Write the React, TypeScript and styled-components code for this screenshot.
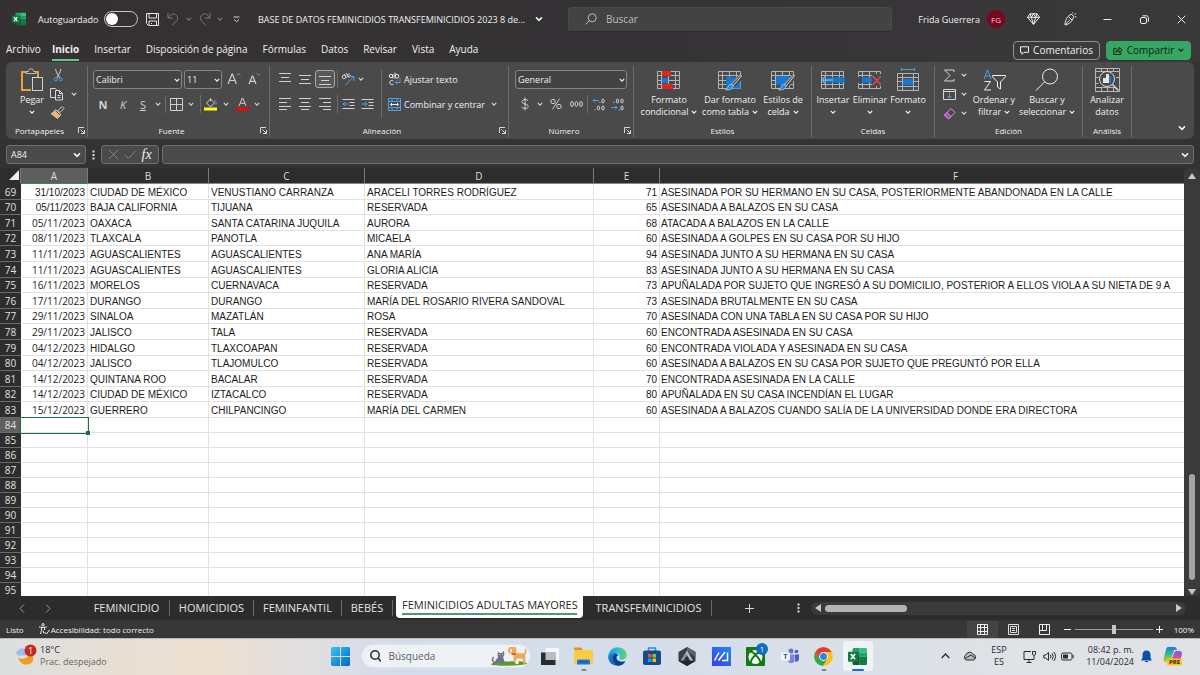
import React from 'react';
import styled, { createGlobalStyle, css } from 'styled-components';

const ui = `"Segoe UI", "Open Sans", "Noto Sans", sans-serif`;
const arial = `Arial, "Liberation Sans", sans-serif`;

const Global = createGlobalStyle`
  *, *::before, *::after { box-sizing: border-box; }
  body { margin: 0; background: #353334; font-family: ${ui}; font-size: 10px; }
  button, input, select { font: inherit; color: inherit; margin: 0; padding: 0; border: 0; background: none; }
  svg { display: block; flex: none; }
`;

/* ---------- shell ---------- */

const App = styled.div`
  display: flex;
  flex-direction: column;
  height: 100vh;
  overflow: hidden;
  color: #f0f0f0;
`;

const TitleBar = styled.header`
  display: grid;
  grid-template-columns: 142fr 81fr 77fr;
  align-items: center;
  height: 38px;
  flex: none;
  background: linear-gradient(90deg, #353132, #353235 50%, #3a393a);
  font-size: 9px;
`;

const TitleLeft = styled.div`
  display: flex;
  align-items: center;
  padding-left: 12px;
  min-width: 0;
  white-space: nowrap;
`;

const AutoSave = styled.label`
  display: flex;
  align-items: center;
  justify-content: space-between;
  width: 100px;
  margin: 0 8px 0 12px;
`;

const Switch = styled.input`
  appearance: none;
  width: 34px;
  height: 16px;
  border: 1px solid #c4c4c4;
  border-radius: 8px;
  display: flex;
  align-items: center;
  padding: 0 1px;
  &::before {
    content: '';
    width: 12px;
    height: 12px;
    border-radius: 50%;
    background: #fff;
  }
`;

const IconButton = styled.button<{ $w?: number; $dim?: boolean }>`
  display: flex;
  align-items: center;
  justify-content: center;
  flex: none;
  width: ${(p) => p.$w ?? 20}px;
  height: 18px;
  color: ${(p) => (p.$dim ? '#7c7a7b' : '#d6d6d6')};
`;

const DocName = styled.button`
  display: flex;
  align-items: center;
  gap: 10px;
  margin-left: 9px;
  white-space: nowrap;
`;

const SearchBox = styled.label`
  display: flex;
  align-items: center;
  gap: 9px;
  height: 25px;
  padding: 0 16px;
  border-radius: 4px;
  background: #434343;
  border: 1px solid #4a4a4a;
  border-bottom-color: #2c2c2c;
  color: #bdbdbd;
  font-size: 10px;
  input { flex: 1; min-width: 0; outline: 0; }
  input::placeholder { color: #bdbdbd; opacity: 1; }
`;

const TitleRight = styled.div`
  display: flex;
  align-items: center;
  justify-content: flex-end;
  white-space: nowrap;
`;

const Avatar = styled.span`
  display: grid;
  place-items: center;
  width: 18px;
  height: 18px;
  margin: 0 10px 0 7px;
  border-radius: 50%;
  background: #76071c;
  color: #f0c9d0;
  font-size: 8px;
`;

const MenuBar = styled.nav`
  display: flex;
  align-items: center;
  height: 24px;
  flex: none;
  padding: 0 9px 0 6px;
  background: linear-gradient(90deg, #353132, #353235 50%, #3a393a);
`;

const MenuTab = styled.button<{ $active?: boolean }>`
  height: 22px;
  margin-right: 15px;
  font-size: 10px;
  white-space: nowrap;
  border-bottom: 2px solid ${(p) => (p.$active ? '#5fc98b' : 'transparent')};
  font-weight: ${(p) => (p.$active ? 700 : 400)};
  &:first-child { margin-right: 11px; }
`;

const MenuSpacer = styled.div`
  flex: 1;
`;

const PillButton = styled.button<{ $primary?: boolean }>`
  display: flex;
  align-items: center;
  justify-content: center;
  gap: 4px;
  height: 19px;
  width: ${(p) => (p.$primary ? 85 : 87)}px;
  margin-left: 6px;
  border-radius: 4px;
  border: 1px solid ${(p) => (p.$primary ? '#37a660' : '#8f8f8f')};
  background: ${(p) => (p.$primary ? '#37a660' : '#3c3b3c')};
  color: ${(p) => (p.$primary ? '#0d2417' : '#f0f0f0')};
  font-size: 10px;
`;

/* ---------- ribbon ---------- */

const Ribbon = styled.section`
  display: flex;
  flex: none;
  margin: 0 6px;
  padding: 4px 0 2px;
  border-radius: 6px;
  background: #4a4a4a;
`;

const Group = styled.div<{ $w: number }>`
  display: flex;
  flex-direction: column;
  flex: none;
  width: ${(p) => p.$w}px;
  border-right: 1px solid #6c6c6c;
`;

const GroupBody = styled.div<{ $pad?: number }>`
  display: flex;
  height: 58px;
  padding-left: ${(p) => p.$pad ?? 4}px;
`;

const GroupFoot = styled.div<{ $launch?: boolean }>`
  display: grid;
  grid-template-columns: ${(p) => (p.$launch ? '1fr 14px' : '1fr')};
  align-items: center;
  height: 13px;
  font-size: 8px;
  line-height: 13px;
  text-align: center;
  white-space: nowrap;
`;

const Launcher = styled.button`
  display: flex;
  justify-content: flex-end;
  margin-right: 2px;
  color: #d6d6d6;
`;

const Rows = styled.div`
  display: flex;
  flex-direction: column;
  gap: 7px;
  padding-top: 4px;
`;

const Row = styled.div`
  display: flex;
  align-items: center;
  height: 18px;
`;

const Stack = styled.div<{ $w: number }>`
  display: flex;
  flex-direction: column;
  width: ${(p) => p.$w}px;
`;

const StackButton = styled.button`
  display: flex;
  align-items: center;
  gap: 5px;
  height: 18px;
  margin-bottom: 1px;
  color: #d6d6d6;
`;

const Tool = styled.button<{ $w?: number; $boxed?: boolean }>`
  display: flex;
  align-items: center;
  justify-content: center;
  flex: none;
  width: ${(p) => p.$w ?? 20}px;
  height: 18px;
  color: #d0d0d0;
  font-size: 11px;
  ${(p) =>
    p.$boxed &&
    css`
      border: 1px solid #a8a8a8;
      border-radius: 3px;
      background: #595959;
    `}
`;

const Rule = styled.span<{ $tall?: boolean }>`
  flex: none;
  width: 1px;
  height: ${(p) => (p.$tall ? 48 : 18)}px;
  margin: ${(p) => (p.$tall ? '4px 6px 0 3px' : '0 2px')};
  background: #6c6c6c;
`;

const TextTool = styled.button`
  display: flex;
  align-items: center;
  gap: 3px;
  height: 18px;
  font-size: 9px;
  white-space: nowrap;
`;

const SelectWrap = styled.label<{ $w: number }>`
  position: relative;
  flex: none;
  width: ${(p) => p.$w}px;
  height: 19px;
  margin-right: 2px;
  select {
    appearance: none;
    width: 100%;
    height: 100%;
    padding: 0 14px 0 2px;
    border: 1px solid #858585;
    border-radius: 3px;
    background: #434343;
    font-size: 9px;
    outline: 0;
  }
  svg { position: absolute; right: 2px; top: 7px; pointer-events: none; }
`;

const BigButton = styled.button<{ $w: number }>`
  display: flex;
  flex-direction: column;
  align-items: center;
  gap: 2px;
  flex: none;
  width: ${(p) => p.$w}px;
  padding-top: 2px;
  font-size: 9px;
  line-height: 12px;
`;

const BigIcon = styled.span`
  display: grid;
  place-items: center;
  height: 24px;
`;

const BigLine = styled.span`
  display: flex;
  align-items: center;
  justify-content: center;
  gap: 3px;
  height: 12px;
  white-space: nowrap;
`;

const Collapse = styled.button`
  margin: auto 8px 5px auto;
`;

/* ---------- formula bar ---------- */

const FormulaBar = styled.div`
  display: flex;
  align-items: center;
  flex: none;
  height: 29px;
  padding: 2px 6px 0;
  background: #343334;
`;

const Field = styled.div<{ $w?: number }>`
  display: flex;
  align-items: center;
  justify-content: space-around;
  height: 19px;
  ${(p) => (p.$w ? `width: ${p.$w}px;` : 'flex: 1; margin-left: 3px;')}
  padding: 0 4px;
  border: 1px solid #6f6f6f;
  border-radius: 3px;
  background: #4a4a4a;
  input { flex: 1; min-width: 0; outline: 0; font-size: 9px; }
`;

const Grip = styled.span`
  display: grid;
  place-items: center;
  width: 15px;
`;

const Fx = styled.span`
  font: italic 14px/16px "Liberation Serif", serif;
  color: #f0f0f0;
`;

/* ---------- sheet ---------- */

const SheetArea = styled.main`
  display: flex;
  flex: 1;
  min-height: 0;
`;

const GridWrap = styled.div`
  flex: 1;
  min-width: 0;
  overflow: hidden;
  background: #fff;
`;

/* The last column runs on past the right edge of the window. */
const Grid = styled.table`
  width: calc(100% + 68px);
  table-layout: fixed;
  border-spacing: 0;
  color: #1b1b1b;
  font-size: 10px;
  line-height: 12px;
`;

const ColHead = styled.th<{ $on?: boolean }>`
  height: 16px;
  padding: 0;
  border-right: 1px solid #7a7a7a;
  border-bottom: 1px solid ${(p) => (p.$on ? '#2f8f5b' : '#8a8a8a')};
  background: ${(p) => (p.$on ? '#5e5e5e' : '#2d2d2d')};
  color: #dcdcdc;
  font-weight: 400;
  text-align: center;
`;

const Corner = styled(ColHead)`
  border-bottom-color: #2d2d2d;
  svg { margin-left: auto; }
`;

const RowHead = styled.th<{ $on?: boolean }>`
  padding: 0;
  border-bottom: 1px solid #6a6a6a;
  background: ${(p) => (p.$on ? '#606060' : '#2d2d2d')};
  color: #e0e0e0;
  font-weight: 400;
  text-align: center;
`;

const SheetRow = styled.tr<{ $h: number }>`
  height: ${(p) => p.$h}px;
`;

const Cell = styled.td<{ $num?: boolean; $ui?: boolean; $sel?: boolean }>`
  position: relative;
  padding: ${(p) => (p.$ui ? '0 2px' : '2px 2px 0')};
  border-right: 1px solid #e2e2e2;
  border-bottom: 1px solid #e2e2e2;
  font-family: ${(p) => (p.$ui ? ui : arial)};
  text-align: ${(p) => (p.$num ? 'right' : 'left')};
  white-space: nowrap;
  overflow: ${(p) => (p.$sel ? 'visible' : 'hidden')};
  &:last-child { padding-left: 1px; }
  ${(p) =>
    p.$sel &&
    css`
      z-index: 1;
      outline: 1px solid #1a7340;
      &::after {
        content: '';
        position: absolute;
        right: -3px;
        bottom: -3px;
        width: 4px;
        height: 4px;
        background: #1a7340;
      }
    `}
`;

const VScroll = styled.div`
  display: flex;
  flex-direction: column;
  align-items: center;
  justify-content: space-between;
  width: 16px;
  padding: 5px 0 1px;
  border-radius: 8px;
  background: #3a3a3a;
`;

const VThumb = styled.div`
  width: 6px;
  height: 106px;
  margin: auto 0 9px;
  border-radius: 3px;
  background: #a3a3a3;
`;

const TabStrip = styled.div`
  display: flex;
  align-items: center;
  flex: none;
  height: 24px;
  background: #2c2c2c;
`;

const SheetNav = styled.div`
  display: flex;
  width: 84px;
  padding-left: 10px;
  gap: 2px;
`;

const SheetTab = styled.button<{ $w: number; $on?: boolean }>`
  flex: none;
  width: ${(p) => p.$w}px;
  height: 16px;
  font-size: 11px;
  line-height: 14px;
  white-space: nowrap;
  color: #e4e4e4;
  border-right: 1px solid #6a6a6a;
  ${(p) =>
    p.$on &&
    css`
      align-self: flex-start;
      height: 22px;
      margin: 0 3px;
      padding-bottom: 2px;
      border: 0;
      border-radius: 0 0 4px 4px;
      background: #fff;
      color: #2a2a2a;
      font-weight: 500;
      span { display: block; margin: 0 6px; border-bottom: 2px solid #4a9d6e; line-height: 16px; }
    `}
`;

const HScroll = styled.div`
  display: flex;
  align-items: center;
  gap: 4px;
  flex: 1;
  height: 13px;
  margin-right: 14px;
  padding: 0 4px;
  border-radius: 7px;
  background: #3a3a3a;
`;

const HThumb = styled.div`
  width: 82px;
  height: 7px;
  margin-right: auto;
  border-radius: 4px;
  background: #b4b4b4;
`;

const StatusBar = styled.footer`
  display: flex;
  align-items: center;
  flex: none;
  height: 18px;
  padding: 0 6px;
  background: #373737;
  font-size: 8px;
`;

const Access = styled.button`
  display: flex;
  align-items: center;
  gap: 1px;
  margin: 0 auto 0 14px;
`;

const ViewButton = styled.button<{ $on?: boolean }>`
  display: grid;
  place-items: center;
  width: 31px;
  height: 17px;
  background: ${(p) => (p.$on ? '#444' : 'transparent')};
`;

const ZoomSet = styled.div`
  display: flex;
  align-items: center;
  margin-left: 3px;
`;

const Zoom = styled.input`
  appearance: none;
  width: 78px;
  height: 10px;
  margin: 0 2px;
  background: linear-gradient(#9a9a9a, #9a9a9a) center / 100% 1px no-repeat;
  &::-webkit-slider-thumb {
    appearance: none;
    width: 4px;
    height: 9px;
    background: #c9c9c9;
  }
`;

const ZoomButton = styled.button`
  display: grid;
  place-items: center;
  width: 10px;
  height: 12px;
`;

const ZoomText = styled.span`
  margin-left: 9px;
`;

/* ---------- taskbar ---------- */

const Taskbar = styled.div`
  display: grid;
  grid-template-columns: 1fr auto 1fr;
  align-items: center;
  flex: none;
  height: 37px;
  padding: 0 12px 2px 15px;
  border-top: 1px solid #b9b9ba;
  background: linear-gradient(90deg, #dcdfe0 0%, #e8dfd4 10%, #ecdfd0 18%, #dfdfe1 26%, #d3dceb 33%, #d5dee9 60%, #dfe2e6 85%, #dfe1e5 100%);
  color: #2b2b2b;
`;

const Weather = styled.div`
  display: flex;
  align-items: center;
  gap: 2px;
  font-size: 9px;
  line-height: 12px;
  p { margin: 0; }
  p + p { color: #6a6560; }
`;

const Apps = styled.div`
  display: flex;
  align-items: center;
`;

const AppButton = styled.button<{ $w?: number; $open?: boolean; $on?: boolean }>`
  position: relative;
  display: grid;
  place-items: center;
  width: ${(p) => p.$w ?? 34}px;
  height: 30px;
  margin-left: ${(p) => (p.$on ? 2 : 0)}px;
  border-radius: 3px;
  background: ${(p) => (p.$on ? '#eff2f6' : 'transparent')};
  ${(p) =>
    (p.$open || p.$on) &&
    css`
      &::after {
        content: '';
        position: absolute;
        bottom: 0;
        left: 50%;
        width: ${p.$on ? 12 : 5}px;
        height: 2px;
        border-radius: 1px;
        background: ${p.$on ? '#0f6fd6' : '#80858b'};
        transform: translateX(-50%);
      }
    `}
`;

const TaskSearch = styled.label`
  display: flex;
  align-items: center;
  gap: 8px;
  width: 170px;
  height: 24px;
  margin: 0 2px 0 10px;
  padding: 0 2px 0 8px;
  border-radius: 12px;
  background: #eef1f6;
  border: 1px solid #dfe4ec;
  font-size: 10px;
  input { flex: 1; min-width: 0; outline: 0; }
  input::placeholder { color: #5b5f66; opacity: 1; }
`;

const Tray = styled.div`
  display: flex;
  align-items: center;
  justify-content: flex-end;
  font-size: 9px;
  line-height: 12px;
`;

const TrayItem = styled.button<{ $w: number }>`
  display: grid;
  place-items: center;
  flex: none;
  width: ${(p) => p.$w}px;
  white-space: nowrap;
`;

const Clock = styled.div`
  width: 56px;
  text-align: right;
  white-space: nowrap;
`;

/* ---------- icons ---------- */

type SvgProps = { w: number; h: number; children: React.ReactNode; c?: string; sw?: number; vb?: string };
const Svg = ({ w, h, children, c = 'currentColor', sw = 1, vb }: SvgProps) => (
  <svg width={w} height={h} viewBox={vb ?? `0 0 ${w} ${h}`} fill="none" stroke={c} strokeWidth={sw} aria-hidden="true">
    {children}
  </svg>
);

const Chev = ({ s = 6, c }: { s?: number; c?: string }) => (
  <Svg w={s} h={s} vb="0 0 8 8" sw={1.6} c={c}><path d="M1 2.4 4 5.4 7 2.4" /></Svg>
);

const Dots = () => (
  <Svg w={3} h={10} c="none"><path fill="#e0e0e0" d="M.5.5h2v2h-2zM.5 4h2v2h-2zM.5 7.500h2v2h-2z" /></Svg>
);

const ExcelIcon = ({ s }: { s: number }) => (
  <svg width={s} height={s} viewBox="0 0 20 20" aria-hidden="true">
    <path fill="#185c37" d="M6 2h6v16H6a1 1 0 0 1-1-1V3a1 1 0 0 1 1-1z" />
    <path fill="#21a366" d="M6 1h6v5H5V2a1 1 0 0 1 1-1z" />
    <path fill="#33c481" d="M12 1h7a1 1 0 0 1 1 1v4h-8z" />
    <path fill="#107c41" d="M5 6h7v4H5z" />
    <path fill="#21a366" d="M12 6h8v4h-8z" />
    <path fill="#107c41" d="M12 10h8v8a1 1 0 0 1-1 1h-7z" />
    <path fill="#185c37" d="M5 10h7v9H6a1 1 0 0 1-1-1z" />
    <rect x="0" y="5" width="10.5" height="10.5" rx="1" fill="#107c41" />
    <path d="M3 7.4 7.500 13M7.500 7.400 3 13" stroke="#fff" strokeWidth="1.7" />
  </svg>
);

const Lines = ({ d }: { d: string }) => <Svg w={14} h={14}><path d={d} /></Svg>;
const LauncherIcon = () => (
  <Svg w={7} h={7}><path d="M.5 6V.5H6M2.500 2.500l4 4M6.500 3v3.500H3" /></Svg>
);

const GridIcon = ({ children }: { children?: React.ReactNode }) => (
  <Svg w={24} h={22} c="#b4b4b4">
    <path d="M.5 2.500h22v17H.5zM.5 6.500h22M.5 11.500h22M.5 15.500h22M4.500 2.500v17M11.500 2.500v17M18.500 2.500v17" />
    {children}
  </Svg>
);
const Brush = () => (
  <>
    <path d="M23 7.500 14.500 17" stroke="#4a4a4a" strokeWidth="5" />
    <path d="M23.300 7.200 15.200 16.800l-1.800-1.600L22 6.400c.8-.6 2 .1 1.300.8z" stroke="#d8d8d8" fill="#4a4a4a" />
    <path d="M13.200 15.500c1.500.3 2.300 1.500 1.600 3-.9 2-4 2.800-7.300 2.200 1.800-.6 2-1.500 2.600-3 .5-1.500 1.600-2.400 3.100-2.200z" fill="#2b88d8" stroke="#d8e8f5" strokeWidth=".6" />
  </>
);

/* ---------- data ---------- */

type Rec = [number, string, string, string, string, number, string];
const records: Rec[] = [
  [69, '31/10/2023', 'CIUDAD DE MÉXICO', 'VENUSTIANO CARRANZA', 'ARACELI TORRES RODRÍGUEZ', 71, 'ASESINADA POR SU HERMANO EN SU CASA, POSTERIORMENTE ABANDONADA EN LA CALLE'],
  [70, '05/11/2023', 'BAJA CALIFORNIA', 'TIJUANA', 'RESERVADA', 65, 'ASESINADA A BALAZOS EN SU CASA'],
  [71, '05/11/2023', 'OAXACA', 'SANTA CATARINA JUQUILA', 'AURORA', 68, 'ATACADA A BALAZOS EN LA CALLE'],
  [72, '08/11/2023', 'TLAXCALA', 'PANOTLA', 'MICAELA', 60, 'ASESINADA A GOLPES EN SU CASA POR SU HIJO'],
  [73, '11/11/2023', 'AGUASCALIENTES', 'AGUASCALIENTES', 'ANA MARÍA', 94, 'ASESINADA JUNTO A SU HERMANA EN SU CASA'],
  [74, '11/11/2023', 'AGUASCALIENTES', 'AGUASCALIENTES', 'GLORIA ALICIA', 83, 'ASESINADA JUNTO A SU HERMANA EN SU CASA'],
  [75, '16/11/2023', 'MORELOS', 'CUERNAVACA', 'RESERVADA', 73, 'APUÑALADA POR SUJETO QUE INGRESÓ A SU DOMICILIO, POSTERIOR A ELLOS VIOLA A SU NIETA DE 9 A'],
  [76, '17/11/2023', 'DURANGO', 'DURANGO', 'MARÍA DEL ROSARIO RIVERA SANDOVAL', 73, 'ASESINADA BRUTALMENTE EN SU CASA'],
  [77, '29/11/2023', 'SINALOA', 'MAZATLÁN', 'ROSA', 70, 'ASESINADA CON UNA TABLA EN SU CASA POR SU HIJO'],
  [78, '29/11/2023', 'JALISCO', 'TALA', 'RESERVADA', 60, 'ENCONTRADA ASESINADA EN SU CASA'],
  [79, '04/12/2023', 'HIDALGO', 'TLAXCOAPAN', 'RESERVADA', 60, 'ENCONTRADA VIOLADA Y ASESINADA EN SU CASA'],
  [80, '04/12/2023', 'JALISCO', 'TLAJOMULCO', 'RESERVADA', 60, 'ASESINADA A BALAZOS EN SU CASA POR SUJETO QUE PREGUNTÓ POR ELLA'],
  [81, '14/12/2023', 'QUINTANA ROO', 'BACALAR', 'RESERVADA', 70, 'ENCONTRADA ASESINADA EN LA CALLE'],
  [82, '14/12/2023', 'CIUDAD DE MÉXICO', 'IZTACALCO', 'RESERVADA', 80, 'APUÑALADA EN SU CASA INCENDÍAN EL LUGAR'],
  [83, '15/12/2023', 'GUERRERO', 'CHILPANCINGO', 'MARÍA DEL CARMEN', 60, 'ASESINADA A BALAZOS CUANDO SALÍA DE LA UNIVERSIDAD DONDE ERA DIRECTORA'],
];
const emptyRows = Array.from({ length: 12 }, (_, i) => 84 + i);
const columns = ['A', 'B', 'C', 'D', 'E', 'F'];
const colWidths = [21, 67, 121, 156, 229, 66];
const menu = ['Archivo', 'Inicio', 'Insertar', 'Disposición de página', 'Fórmulas', 'Datos', 'Revisar', 'Vista', 'Ayuda'];

const Big = ({ w, icon, lines, chev }: { w: number; icon: React.ReactNode; lines: string[]; chev?: 'inline' | 'below' }) => (
  <BigButton $w={w}>
    <BigIcon>{icon}</BigIcon>
    <span>
      {lines.map((t, i) => (
        <BigLine key={t}>
          {t}
          {chev === 'inline' && i === lines.length - 1 && <Chev />}
        </BigLine>
      ))}
      {chev === 'below' && <BigLine><Chev /></BigLine>}
    </span>
  </BigButton>
);

const Foot = ({ label, launch }: { label: string; launch?: boolean }) => (
  <GroupFoot $launch={launch}>
    <span>{label}</span>
    {launch && <Launcher aria-label={`Configuración de ${label}`}><LauncherIcon /></Launcher>}
  </GroupFoot>
);

const Select = ({ w, label, value }: { w: number; label: string; value: string }) => (
  <SelectWrap $w={w}>
    <select aria-label={label} defaultValue={value}><option>{value}</option></select>
    <Chev />
  </SelectWrap>
);

/* ---------- sections ---------- */

const Title = () => (
  <TitleBar>
    <TitleLeft>
      <ExcelIcon s={14} />
      <AutoSave>Autoguardado<Switch type="checkbox" role="switch" /></AutoSave>
      <IconButton aria-label="Guardar" $w={13}>
        <Svg w={13} h={13} c="#e4e4e4"><path d="M.5.5h12v12H2.500l-2-2zM3 .5v4.500h7.500V.5M3 12.500V8h7.500v4.500M5 10.500h1" /></Svg>
      </IconButton>
      <IconButton aria-label="Deshacer" $w={27} $dim>
        <Svg w={12} h={14}><path d="M1 1v5h5M1.200 5.800C3 2.500 6 1 8.500 2.500 11.500 4.500 11 8 8.500 10L5 13.300" /></Svg>
      </IconButton>
      <Chev c="#7c7a7b" />
      <IconButton aria-label="Rehacer" $w={25} $dim>
        <Svg w={12} h={14}><path d="M11 1v5H6M10.800 5.800C9 2.500 6 1 3.500 2.500.5 4.500 1 8 3.500 10L7 13.300" /></Svg>
      </IconButton>
      <Chev c="#7c7a7b" />
      <IconButton aria-label="Personalizar barra" $w={26}>
        <Svg w={7} h={7}><path d="M.5 1h6M1 3.500l2.500 2.200L6 3.500" /></Svg>
      </IconButton>
      <DocName>BASE DE DATOS FEMINICIDIOS TRANSFEMINICIDIOS 2023 8 de...<Chev s={8} /></DocName>
    </TitleLeft>
    <SearchBox>
      <Svg w={12} h={12}><circle cx="7.200" cy="4.800" r="4" /><path d="M4.300 7.700.6 11.400" /></Svg>
      <input type="search" placeholder="Buscar" aria-label="Buscar" />
    </SearchBox>
    <TitleRight>
      Frida Guerrera
      <Avatar>FG</Avatar>
      <IconButton aria-label="Premium" $w={37}>
        <Svg w={13} h={12} c="#f0f0f0"><path d="M3 .8h7l2.500 3.500-6 7-6-7zM.5 4.300h12M4.300 4.300l2.200 7 2.200-7-2.200-3.500zM3 .8l1.300 3.500M10 .8 8.700 4.300" /></Svg>
      </IconButton>
      <IconButton aria-label="Novedades" $w={37}>
        <Svg w={13} h={14} c="#e4e4e4"><path d="M1 13c0-3 .8-6 2.500-8L7 2l3 2.500-2 4C6.500 11 4 12.500 1 13zM1.500 12.500 6 7.500M4.500 4.500l3.500 3.500M8.700.5v1M10.500 2.700 12 1.200M11 4.800h1.500" /></Svg>
      </IconButton>
      <IconButton aria-label="Minimizar" $w={37}><Svg w={9} h={9} c="#f0f0f0"><path d="M.5 4.500h8" /></Svg></IconButton>
      <IconButton aria-label="Restaurar" $w={37}>
        <Svg w={9} h={9} c="#f0f0f0"><rect x=".5" y="2.500" width="6" height="6" rx="1.500" /><path d="M2.500.8H6.500c1 0 1.900.9 1.900 1.900v4" /></Svg>
      </IconButton>
      <IconButton aria-label="Cerrar" $w={37}><Svg w={9} h={9} c="#f0f0f0"><path d="m.7.7 7.600 7.600M8.300.7.7 8.300" /></Svg></IconButton>
    </TitleRight>
  </TitleBar>
);

const Menus = () => (
  <MenuBar>
    {menu.map((m) => <MenuTab key={m} $active={m === 'Inicio'}>{m}</MenuTab>)}
    <MenuSpacer />
    <PillButton>
      <Svg w={9} h={9}><path d="M.5.8h8v5.500H4L2 8.300v-2H.5z" /></Svg>
      Comentarios
    </PillButton>
    <PillButton $primary>
      <Svg w={10} h={9}><path d="M3.500 2.500H.8v6h7V6.500M2.800 6.300c.2-2 1.500-3 3.400-3V1.500l3 2.600-3 2.600V5c-1.500 0-2.500.3-3.400 1.300z" /></Svg>
      Compartir
      <Chev />
    </PillButton>
  </MenuBar>
);

const RibbonBar = () => (
  <Ribbon>
    <Group $w={82}>
      <GroupBody $pad={12}>
        <Big w={28} lines={['Pegar']} chev="below" icon={
          <Svg w={24} h={24}>
            <path d="M6.500 4H2v18h9" stroke="#e8a33d" strokeWidth="2" /><path d="M15.500 4H18v5" stroke="#e8a33d" strokeWidth="2" />
            <path d="M6 5.500V3.500h2.500C8.500 1.500 9.500.8 11 .8s2.500.7 2.500 2.700H16v2z" stroke="#bcbcbc" />
            <rect x="12.500" y="9.500" width="10" height="13" fill="#4a4a4a" stroke="#d0d0d0" />
          </Svg>} />
        <Stack $w={32}>
          <StackButton aria-label="Cortar"><Svg w={20} h={14} vb="3 0 20 14"><path d="M12.500 1c1 4 2.500 6 4.200 8.800M18 1c-1 4-2.500 6-4.200 8.800" /><g stroke="#4ba0e8"><circle cx="12.800" cy="11.300" r="1.600" /><circle cx="17.700" cy="11.300" r="1.600" /></g></Svg></StackButton>
          <StackButton aria-label="Copiar">
            <Svg w={20} h={14} vb="4 0 20 14"><path d="M13.500 10.500h-5v-9h5l1 1M13.500 3.500h4l3 3v6.500h-7zM17.500 3.500v3h3M15.500 8.500h3M15.500 10.500h3" /></Svg>
            <Chev />
          </StackButton>
          <StackButton aria-label="Copiar formato"><Svg w={20} h={14} vb="3 1 20 14"><path d="m15 5.500 4-4 2 2-4 4z" fill="#4a4a4a" /><path d="m12.500 4.500 5.500 5.300-1.500 1-5-5z" stroke="#e8e0d0" /><path d="M11.500 6c-1 1.500-2 2-3.500 2.500l6.500 5c1-.8 1.800-1.500 2-2.700z" fill="#f0b660" stroke="#f0c98d" /></Svg></StackButton>
        </Stack>
      </GroupBody>
      <Foot label="Portapapeles" launch />
    </Group>

    <Group $w={182}>
      <GroupBody $pad={5}>
        <Rows>
          <Row>
            <Select w={89} label="Fuente" value="Calibri" />
            <Select w={38} label="Tamaño de fuente" value="11" />
            <Tool aria-label="Aumentar tamaño"><Svg w={14} h={14}><path d="M1 12 5 2h.4l4 10M2.500 8.500H8" strokeWidth="1.200" /><path d="m9.500 3.500 2-2 2 2" stroke="#4ba0e8" /></Svg></Tool>
            <Tool aria-label="Reducir tamaño"><Svg w={14} h={14}><path d="M2 12 5.300 4h.4L9 12M3.200 9.300H8" strokeWidth="1.200" /><path d="m9.500 1.500 2 2 2-2" stroke="#4ba0e8" /></Svg></Tool>
          </Row>
          <Row>
            <Tool><b>N</b></Tool>
            <Tool><i>K</i></Tool>
            <Tool><u>S</u></Tool>
            <Tool $w={10} aria-label="Más subrayados"><Chev /></Tool>
            <Rule />
            <Tool $w={16} aria-label="Bordes"><Svg w={13} h={13}><path d="M.5.5h12v12H.5zM6.500.5v12M.5 6.500h12" /></Svg></Tool>
            <Tool $w={14} aria-label="Más bordes"><Chev /></Tool>
            <Rule />
            <Tool $w={16} aria-label="Color de relleno"><Svg w={14} h={14}><path d="M6.500 1v3M2.500 6l4-4 4 4-4 4z" /><path d="M10 3c2 .5 2.300 2.500 2 4.500" stroke="#4ba0e8" /><path d="M0 12h13" stroke="#ffff00" strokeWidth="3" /></Svg></Tool>
            <Tool $w={14} aria-label="Más rellenos"><Chev /></Tool>
            <Tool $w={18} aria-label="Color de fuente"><Svg w={13} h={14}><path d="M3 9 6.300 1h.4L10 9M4.200 6.300H9" /><path d="M0 12h13" stroke="#ff0000" strokeWidth="3" /></Svg></Tool>
            <Tool $w={12} aria-label="Más colores"><Chev /></Tool>
          </Row>
        </Rows>
      </GroupBody>
      <Foot label="Fuente" launch />
    </Group>

    <Group $w={239}>
      <GroupBody $pad={5}>
        <Rows>
          <Row>
            <Tool aria-label="Alinear arriba"><Lines d="M1 1.500h12M3 5.500h8M1 9.500h12" /></Tool>
            <Tool aria-label="Alinear al medio"><Lines d="M1 3.500h12M3 7.500h8M1 11.500h12" /></Tool>
            <Tool $boxed aria-label="Alinear abajo"><Lines d="M1 4.500h12M3 8.500h8M1 12.500h12" /></Tool>
            <Rule />
            <Tool $w={16} aria-label="Orientación"><Svg w={14} h={14}><g stroke="#cfcfcf"><circle cx="3" cy="5" r="1.800" /><path d="m3 2 2.500 3.500M5 1l3.500 4.500" /><circle cx="7.500" cy="3.500" r="1.500" /></g><path d="m4.500 13 8-8M8.500 4.500h4.500V9" stroke="#4ba0e8" /></Svg></Tool>
            <Tool $w={10} aria-label="Más orientaciones"><Chev /></Tool>
          </Row>
          <Row>
            <Tool aria-label="Alinear a la izquierda"><Lines d="M1 1.500h12M1 5.500h8M1 9.500h12M1 12.500h8" /></Tool>
            <Tool aria-label="Centrar"><Lines d="M1 1.500h12M3 5.500h8M1 9.500h12M3 12.500h8" /></Tool>
            <Tool aria-label="Alinear a la derecha"><Lines d="M1 1.500h12M5 5.500h8M1 9.500h12M5 12.500h8" /></Tool>
            <Rule />
            <Tool $w={16} aria-label="Disminuir sangría"><Svg w={13} h={12}><path d="M.5 1.500h12M7.500 4.500h5M7.500 7.500h5M.5 10.500h12" /><path d="M6 6H1M3 4 1 6l2 2" stroke="#4ba0e8" /></Svg></Tool>
            <Tool $w={22} aria-label="Aumentar sangría"><Svg w={13} h={12}><path d="M.5 1.500h12M7.500 4.500h5M7.500 7.500h5M.5 10.500h12" /><path d="M.5 6h5M4 4l2 2-2 2" stroke="#4ba0e8" /></Svg></Tool>
          </Row>
        </Rows>
        <Rule $tall />
        <Rows>
          <TextTool>
            <Svg w={13} h={14}><circle cx="3" cy="4" r="1.700" /><path d="M4.900 2v4.500M7 .5v6" /><circle cx="8.900" cy="4.300" r="1.900" /><path d="M5.500 9.200C4.500 8 1.800 8.300 1.800 10.500s2.700 2.700 3.700 1.500" /><path d="M12 6v4.500H7.500M9.500 8.300l-2.200 2.200 2.200 2.200" stroke="#4ba0e8" /></Svg>
            Ajustar texto
          </TextTool>
          <TextTool>
            <Svg w={13} h={13}><path d="M.5.5h12v12H.5zM4 .5v3M9 .5v3M4 9.500v3M9 9.500v3M.5 3.500h12M.5 9.500h12" stroke="#4ba0e8" /><path d="M2.500 6.500h8M4 5 2.500 6.500 4 8M9 5l1.500 1.500L9 8" /></Svg>
            Combinar y centrar
            <Tool as="span" $w={12}><Chev /></Tool>
          </TextTool>
        </Rows>
      </GroupBody>
      <Foot label="Alineación" launch />
    </Group>

    <Group $w={125}>
      <GroupBody $pad={6}>
        <Rows>
          <Row><Select w={112} label="Formato de número" value="General" /></Row>
          <Row>
            <Tool aria-label="Moneda"><Svg w={10} h={14}><path d="M8 4C7.500 2.800 6.500 2.500 5 2.500S2 3.200 2 4.700 3.500 6.700 5 7s3.200.8 3.200 2.500S6.500 11.500 5 11.500 2 11 1.800 9.700M5 .5v13" /></Svg></Tool>
            <Tool $w={10} aria-label="Más monedas"><Chev /></Tool>
            <Tool $w={22} aria-label="Porcentaje"><Svg w={12} h={12}><circle cx="3" cy="3.500" r="2.200" /><circle cx="9" cy="8.500" r="2.200" /><path d="M9.500.8 2.500 11.200" /></Svg></Tool>
            <Tool $w={18} aria-label="Millares"><Svg w={13} h={8}><ellipse cx="2" cy="4" rx="1.400" ry="2.500" /><ellipse cx="6.500" cy="4" rx="1.400" ry="2.500" /><ellipse cx="11" cy="4" rx="1.400" ry="2.500" /></Svg></Tool>
            <Rule />
            <Tool $w={16} aria-label="Aumentar decimales"><Svg w={13} h={13}><ellipse cx="11" cy="3" rx="1.200" ry="2" /><ellipse cx="6.500" cy="10" rx="1.200" ry="2" /><ellipse cx="11" cy="10" rx="1.200" ry="2" /><path d="M3 11.500v1M8 4v1" /><path d="M7 2.500H1M3 .5l-2 2 2 2" stroke="#4ba0e8" /></Svg></Tool>
            <Tool $w={22} aria-label="Disminuir decimales"><Svg w={13} h={13}><ellipse cx="6.500" cy="3" rx="1.200" ry="2" /><ellipse cx="11" cy="3" rx="1.200" ry="2" /><ellipse cx="11" cy="10" rx="1.200" ry="2" /><path d="M3 4v1M8 11.500v1" /><path d="M0 9.500h6M4 7.500l2 2-2 2" stroke="#4ba0e8" /></Svg></Tool>
          </Row>
        </Rows>
      </GroupBody>
      <Foot label="Número" launch />
    </Group>

    <Group $w={178}>
      <GroupBody>
        <Big w={62} lines={['Formato', 'condicional']} chev="inline" icon={
          <GridIcon><g stroke="none"><path fill="#e3241b" d="M5 2h9v5H5zM5 15h11v5H5z" /><path fill="#1478d4" d="M5 9h6v5H5z" /></g></GridIcon>} />
        <Big w={60} lines={['Dar formato', 'como tabla']} chev="inline" icon={
          <GridIcon><path fill="#1478d4" stroke="none" d="M8 8h14.500v11.500H8z" /><Brush /></GridIcon>} />
        <Big w={46} lines={['Estilos de', 'celda']} chev="inline" icon={
          <GridIcon><path fill="#1478d4" stroke="none" d="M5 7h14v9H5z" /><Brush /></GridIcon>} />
      </GroupBody>
      <Foot label="Estilos" />
    </Group>

    <Group $w={123}>
      <GroupBody $pad={3}>
        <Big w={36} lines={['Insertar']} chev="below" icon={
          <GridIcon><path fill="#1478d4" stroke="none" d="M6 8.500h18v5H6z" /><path d="M12 11H1M5 6.500.8 11 5 15.500" stroke="#5fb0ee" strokeWidth="1.300" /></GridIcon>} />
        <Big w={38} lines={['Eliminar']} chev="below" icon={
          <GridIcon><path fill="#4a4a4a" stroke="none" d="M14 5h10v12H14zM0 8h5v6H0z" /><path fill="#1478d4" stroke="none" d="M4 8.500h10v5H4z" /><path d="m14.500 7 8.500 9M23 7l-8.500 9" stroke="#e5483e" strokeWidth="1.300" /></GridIcon>} />
        <Big w={38} lines={['Formato']} chev="below" icon={
          <Svg w={24} h={24} c="#b4b4b4"><path d="M1.500 5.500h21v17h-21zM1.500 9.500h21M1.500 13.500h21M1.500 18.500h21M6.500 5.500v17M17.500 5.500v17" /><path fill="#1478d4" stroke="none" d="M7 11h10v6H7z" /><path d="M5.500 1.500h13M5.500 0v3M18.500 0v3" stroke="#4ba0e8" /></Svg>} />
      </GroupBody>
      <Foot label="Celdas" />
    </Group>

    <Group $w={148}>
      <GroupBody $pad={8}>
        <Stack $w={26}>
          <StackButton aria-label="Autosuma"><Svg w={13} h={13}><path d="M11 3V1H1.500L7 6.500 1.500 12H11v-2" /></Svg><Chev /></StackButton>
          <StackButton aria-label="Rellenar"><Svg w={13} h={13}><path d="M.5 1.500h12v10H.5zM.5 3.500h12" /><path d="M6.500 4.500v5.500M4.500 8l2 2 2-2" stroke="#4ba0e8" /></Svg><Chev /></StackButton>
          <StackButton aria-label="Borrar"><Svg w={13} h={13}><path d="M8 1.500 12 5.500 5.500 12 1.500 8z" stroke="#d88fe0" /><path d="M4 5.500 8 9.500 5.500 12 1.500 8z" fill="#b448c4" stroke="#d88fe0" /></Svg><Chev /></StackButton>
        </Stack>
        <Big w={50} lines={['Ordenar y', 'filtrar']} chev="inline" icon={
          <Svg w={24} h={24}><path d="M2 11 5.300 2h.4L9 11M3.200 8h4.600" stroke="#4ba0e8" /><path d="M2.500 13.500h6L2.500 22H9" /><path d="M10.500 7.500h13v1.300L18.500 14v7l-3-2v-5l-5-5.200z" /></Svg>} />
        <Big w={56} lines={['Buscar y', 'seleccionar']} chev="inline" icon={
          <Svg w={24} h={24}><circle cx="15" cy="8.500" r="7.500" /><path d="M9.500 14 1 22.500" /></Svg>} />
      </GroupBody>
      <Foot label="Edición" />
    </Group>

    <Group $w={49}>
      <GroupBody $pad={0}>
        <Big w={48} lines={['Analizar', 'datos']} icon={
          <Svg w={25} h={24} c="#b8b8b8"><path d="M.5.5h24v23H.5zM.5 3.500h24M6.500.5v3M12.500.5v3M18.500.5v3M.5 9.500h3M.5 15.500h3M6.500 20v3.500M12.500 20v3.500M18.500 20v3.500M21 9.500h3.500M.5 19.500h20" /><circle cx="12" cy="11" r="7.500" fill="#4a4a4a" stroke="#dcdcdc" /><path d="m17.500 16.500 6 6" stroke="#dcdcdc" strokeWidth="1.500" /><path stroke="none" fill="#e4e4e4" d="M8 10h3v5H8zM11 6h3v9h-3z" /><path stroke="none" fill="#1478d4" d="M14 8h2v7h-2z" /></Svg>} />
      </GroupBody>
      <Foot label="Análisis" />
    </Group>
    <Collapse aria-label="Contraer cinta"><Chev s={8} /></Collapse>
  </Ribbon>
);

const Formula = () => (
  <FormulaBar>
    <Field $w={80}>
      <input aria-label="Cuadro de nombres" defaultValue="A84" />
      <Chev s={8} />
    </Field>
    <Grip><Dots /></Grip>
    <Field $w={58}>
      <Svg w={11} h={11} c="#858585"><path d="m1 1 9 9M10 1l-9 9" /></Svg>
      <Svg w={13} h={11} c="#858585"><path d="m1 6 3.500 3.500L12 1.500" /></Svg>
      <Fx>fx</Fx>
    </Field>
    <Field>
      <input aria-label="Barra de fórmulas" defaultValue="" />
      <Chev s={8} />
    </Field>
  </FormulaBar>
);

const Sheet = () => (
  <SheetArea>
    <GridWrap>
      <Grid>
        <colgroup>
          {colWidths.map((w, i) => <col key={i} width={w} />)}
          <col />
        </colgroup>
        <thead>
          <tr>
            <Corner aria-label="Seleccionar todo"><svg width="11" height="11" viewBox="0 0 11 11" aria-hidden="true"><path d="M10 0v10H0z" fill="#f0f0f0" /></svg></Corner>
            {columns.map((c) => <ColHead key={c} scope="col" $on={c === 'A'}>{c}</ColHead>)}
          </tr>
        </thead>
        <tbody>
          {records.map(([n, date, state, city, name, age, note], i) => (
            <SheetRow key={n} $h={i % 5 === 1 || i % 5 === 3 ? 15 : 16}>
              <RowHead scope="row">{n}</RowHead>
              <Cell $num $ui={i > 1}>{date}</Cell>
              <Cell>{state}</Cell>
              <Cell>{city}</Cell>
              <Cell>{name}</Cell>
              <Cell $num>{age}</Cell>
              <Cell>{note}</Cell>
            </SheetRow>
          ))}
          {emptyRows.map((n) => (
            <SheetRow key={n} $h={15}>
              <RowHead scope="row" $on={n === 84}>{n}</RowHead>
              {columns.map((c) => <Cell key={c} $sel={n === 84 && c === 'A'} />)}
            </SheetRow>
          ))}
        </tbody>
      </Grid>
    </GridWrap>
    <VScroll>
      <Svg w={8} h={6} c="none"><path fill="#c8c8c8" d="M4 0l4 6H0z" /></Svg>
      <VThumb />
      <Svg w={8} h={6} c="none"><path fill="#c8c8c8" d="M0 0h8L4 6z" /></Svg>
    </VScroll>
  </SheetArea>
);

const SheetTabs = () => (
  <TabStrip>
    <SheetNav>
      <IconButton aria-label="Hoja anterior" $w={24}><Svg w={6} h={9} c="#9a9a9a"><path d="M5 .5 1 4.500l4 4" /></Svg></IconButton>
      <IconButton aria-label="Hoja siguiente" $w={24}><Svg w={6} h={9} c="#9a9a9a"><path d="m1 .5 4 4-4 4" /></Svg></IconButton>
    </SheetNav>
    <SheetTab $w={86}>FEMINICIDIO</SheetTab>
    <SheetTab $w={84}>HOMICIDIOS</SheetTab>
    <SheetTab $w={88}>FEMINFANTIL</SheetTab>
    <SheetTab $w={51}>BEBÉS</SheetTab>
    <SheetTab $w={187} $on><span>FEMINICIDIOS ADULTAS MAYORES</span></SheetTab>
    <SheetTab $w={126}>TRANSFEMINICIDIOS</SheetTab>
    <IconButton aria-label="Hoja nueva" $w={74}><Svg w={9} h={9}><path d="M4.500 0v9M0 4.500h9" /></Svg></IconButton>
    <IconButton as="span" $w={25}><Dots /></IconButton>
    <HScroll>
      <Svg w={6} h={8} c="none"><path fill="#c8c8c8" d="M6 0v8L0 4z" /></Svg>
      <HThumb />
      <Svg w={6} h={8} c="none"><path fill="#c8c8c8" d="M0 0v8l6-4z" /></Svg>
    </HScroll>
  </TabStrip>
);

const Status = () => (
  <StatusBar>
    Listo
    <Access>
      <Svg w={12} h={12}><circle cx="5" cy="1.800" r="1.200" /><path d="M1 3.800c1.500.8 6.500.8 8 0M3.500 4.500v3L2.500 11M6.500 4.500v2.500M5 7.500l1 3M6.500 9l2 2L11.500 7" /></Svg>
      Accesibilidad: todo correcto
    </Access>
    <ViewButton $on aria-label="Normal"><Svg w={11} h={11} c="#f0f0f0"><path d="M.5.5h10v10H.5zM.5 3.500h10M.5 7.500h10M3.500.5v10M7.500.5v10" /></Svg></ViewButton>
    <ViewButton aria-label="Diseño de página"><Svg w={11} h={11} c="#e0e0e0"><path d="M.5.5h10v10H.5zM2.500 2.500h6v6h-6zM4 4.500h3M4 6.500h3" /></Svg></ViewButton>
    <ViewButton aria-label="Salto de página"><Svg w={11} h={11} c="#f0f0f0"><path d="M.5.5h10v10H.5zM.5 6.500h7M7.500.5v6M3.500.5v6" /></Svg></ViewButton>
    <ZoomSet>
      <ZoomButton aria-label="Alejar"><Svg w={7} h={7}><path d="M0 3.500h7" /></Svg></ZoomButton>
      <Zoom type="range" aria-label="Zoom" defaultValue={50} />
      <ZoomButton aria-label="Acercar"><Svg w={7} h={7}><path d="M0 3.500h7M3.500 0v7" /></Svg></ZoomButton>
      <ZoomText>100%</ZoomText>
    </ZoomSet>
  </StatusBar>
);

const Tasks = () => (
  <Taskbar>
    <Weather>
      <svg width="23" height="24" viewBox="0 0 23 24" aria-hidden="true">
        <path d="M3 13.500c3 2.500 9 1.500 11-3 4 0 5 3 4 6-2 5-12 7-15-3z" fill="#f29b24" />
        <path d="M3 11.500a2.600 2.600 0 0 1 .3-5 4 4 0 0 1 7.500 1c2.500.3 2.500 4 0 4z" fill="#9cc0ee" />
        <circle cx="15.500" cy="6.500" r="6" fill="#c42b1c" />
        <text x="15.500" y="10" fill="#fff" fontSize="9" textAnchor="middle">1</text>
      </svg>
      <div><p>18°C</p><p>Prac. despejado</p></div>
    </Weather>
    <Apps>
      <AppButton $w={20} aria-label="Inicio">
        <svg width="19" height="19" viewBox="0 0 19 19" aria-hidden="true">
          <defs><linearGradient id="win" x1="0" y1="0" x2="1" y2="1"><stop stopColor="#3cc3f5" /><stop offset="1" stopColor="#0067c8" /></linearGradient></defs>
          <path fill="url(#win)" d="M1 0h8v9H0V1zM10 0h8l1 1v8h-9zM0 10h9v9H1l-1-1zM10 10h9v8l-1 1h-8z" />
        </svg>
      </AppButton>
      <TaskSearch>
        <Svg w={11} h={12} sw={1.500}><circle cx="5" cy="5" r="4.200" /><path d="m8 8 3 3.500" /></Svg>
        <input type="search" placeholder="Búsqueda" aria-label="Búsqueda" />
        <svg width="38" height="20" viewBox="0 0 38 20" aria-hidden="true">
          <path d="M1 18.500c1-2.500 8-3.500 17-3 8-.5 18-.5 19 2-2 2.500-34 3-36 1z" fill="#5d9a28" />
          <path d="M5.500 17c-.5-2.500.5-4 2.500-5.500l-.5-2.500.3-3.500L9.500 7h2.500L14 4.500l.3 4.500-1.300 2.500c1.200 1.500 1.500 4 1.200 5.500z" fill="#70728a" />
          <path d="M6 16.500c-3.500 0-4.500-3-2.500-5.500" stroke="#70728a" strokeWidth="1.500" fill="none" />
          <circle cx="9.500" cy="8.500" r=".6" fill="#f5d04a" /><circle cx="12.500" cy="8.500" r=".6" fill="#f5d04a" />
          <path d="M18 4.500c0-2 1-3.500 2.500-3.500h4c1.500 0 2 1.500 2 3.500L25.800 7l7.700.5c1.500-1 1.800-3 1.300-5l1.400.2c.8 2.500 0 5.300-1.200 6.800l.5 7h-2l-1-4h-6l-.5 4h-2l-.5-6.500L22 7.500h-2.500L18 5.500z" fill="#eda955" />
          <path d="M20 3h2v3.500h-2z" fill="#fbe2bd" /><path d="M21.500 8h4" stroke="#d03030" strokeWidth="1.300" />
          <circle cx="27" cy="16.500" r="1.800" fill="#fff" /><circle cx="27" cy="16.500" r=".7" fill="#f2c230" />
          <circle cx="4" cy="17" r="1" fill="#e04a3a" /><circle cx="34.500" cy="17" r="1" fill="#f2c230" />
        </svg>
      </TaskSearch>
      <AppButton aria-label="Vista de tareas">
        <svg width="18" height="17" viewBox="0 0 18 17" aria-hidden="true"><path d="M0 4.500h14.500V17H0z" fill="#2c2c2c" /><path d="M4.500 0H18v12H14.500V4.500H4.500z" fill="#f4f6f8" /><path d="M4.500 4.500h10V12h-10z" fill="#b9bcc0" /></svg>
      </AppButton>
      <AppButton $open aria-label="Explorador">
        <svg width="19" height="18" viewBox="0 0 19 18" aria-hidden="true"><path d="M0 1.500A1 1 0 0 1 1 .5h6l2 2.500H0z" fill="#e0941b" /><path d="M0 3h18a1 1 0 0 1 1 1v13H0z" fill="#fbcb48" /><path d="M3 17.500v-3.500a1.500 1.500 0 0 1 1.500-1.500h10a1.500 1.500 0 0 1 1.500 1.500v3.500z" fill="#1f7ad0" /><path d="M5 15h9" stroke="#0b4f94" /></svg>
      </AppButton>
      <AppButton aria-label="Edge">
        <svg width="19" height="19" viewBox="0 0 19 19" aria-hidden="true">
          <defs>
            <linearGradient id="ed" x1="0" y1="0" x2="1" y2="0"><stop stopColor="#1b9de2" /><stop offset=".6" stopColor="#35c1c9" /><stop offset="1" stopColor="#66d65a" /></linearGradient>
            <linearGradient id="eb" x1="0" y1="0" x2="1" y2="1"><stop stopColor="#1a86de" /><stop offset="1" stopColor="#0c4fa0" /></linearGradient>
          </defs>
          <path d="M.2 9.500C.5 6.500 3.500 5 7 5.500c1 .5 3 1 3.500 3C8.500 9 8 10.500 8.700 12c1.300 2.700 4.800 3.500 8.600 2.200C15.500 17.500 12.500 19 9.500 18.800 4.300 18.800 0 14.800.2 9.500z" fill="url(#eb)" />
          <path d="M6 8c-2.500 3-.8 8.500 4 10.600 3 .1 5.800-1.600 7.300-4.400-3 1.200-6.300.6-8-1.200C8 11.500 8 9.500 9.500 8.300 8.500 7 7 7 6 8z" fill="#0b3f86" />
          <path d="M.3 9C.8 4 4.800.2 9.500.2c5 0 9.300 3.600 9.300 7.800 0 3-2.300 4.700-5 4.700-2 0-3-.8-2.500-1.700 1.500-2.500-.3-5-3.300-5C4 6 1 7.500.3 9z" fill="url(#ed)" />
        </svg>
      </AppButton>
      <AppButton aria-label="Microsoft Store">
        <svg width="18" height="18" viewBox="0 0 18 18" aria-hidden="true"><path d="M5.500 4V1h7v3" stroke="#2b8fe0" strokeWidth="1.500" fill="none" /><rect y="3.500" width="18" height="14.500" rx="2" fill="#17498c" /><path fill="#f1502f" d="M5 7h3.500v3.500H5z" /><path fill="#80cc28" d="M9.500 7H13v3.500H9.500z" /><path fill="#0fa4e8" d="M5 11.500h3.500V15H5z" /><path fill="#fbbc09" d="M9.500 11.500H13V15H9.500z" /></svg>
      </AppButton>
      <AppButton $w={36} aria-label="Armoury Crate">
        <svg width="18" height="19" viewBox="0 0 18 19" aria-hidden="true"><path d="m9 0 8.500 5v9L9 19 .5 14V5z" fill="#3b3f45" /><path d="m9 0 8.500 5v5L9 4z" fill="#5c6168" /><path d="M.5 14 9 13l8.500 1L9 19z" fill="#22252a" /><path d="m9 3.500-6.500 10H8l2-3.500z" fill="#8d939b" /><path d="m9 8.500-3.500 5H12z" fill="#2c3036" /><path d="m9 3.500 6 10h-3L8 6z" fill="#b6bbc2" /></svg>
      </AppButton>
      <AppButton $w={33} aria-label="MyASUS">
        <svg width="19" height="19" viewBox="0 0 19 19" aria-hidden="true"><defs><linearGradient id="as" x1="0" y1="1" x2="1" y2="0"><stop stopColor="#3a3fe6" /><stop offset="1" stopColor="#1f8cf4" /></linearGradient></defs><path fill="url(#as)" d="M0 0h19v19H0z" /><path d="M2.500 13.500 7 5.500M6.500 13.500 13 5M10 13.500h5.500V5.500" stroke="#fff" strokeWidth="1.500" fill="none" /></svg>
      </AppButton>
      <AppButton $w={36} aria-label="Xbox">
        <svg width="24" height="26" viewBox="0 0 24 26" aria-hidden="true"><rect x="2" y="4" width="19" height="19" rx="1" fill="#107c10" /><circle cx="11.500" cy="14" r="7" fill="#fff" /><path d="M6 8.500c2 0 4 1.500 5.500 3.500 1.500-2 3.500-3.500 5.500-3.500M11.500 12c-2.500 2-4.500 5-5 8M11.500 12c2.500 2 4.500 5 5 8" stroke="#107c10" strokeWidth="2" fill="none" /><circle cx="18" cy="6" r="6" fill="#0f6cc4" /><text x="18" y="9" fill="#fff" fontSize="8" textAnchor="middle">1</text></svg>
      </AppButton>
      <AppButton $w={33} aria-label="Teams">
        <svg width="18" height="17" viewBox="0 0 18 17" aria-hidden="true"><circle cx="10" cy="3" r="2.500" fill="#6b72d8" /><circle cx="15.500" cy="3.500" r="1.800" fill="#5059c9" /><path d="M7 6.500h6.500V13a3.500 3.500 0 0 1-6.500 0z" fill="#7b83eb" /><path d="M14 6.500h4V11c0 2-2 3-4 2.500z" fill="#5059c9" /><rect y="4.500" width="9" height="8" rx="1" fill="#f4f4fb" /><path d="M2.500 6.500h4M4.500 6.500V11" stroke="#4b53bc" strokeWidth="1.200" /></svg>
      </AppButton>
      <AppButton $open aria-label="Chrome">
        <svg width="19" height="19" viewBox="0 0 19 19" aria-hidden="true"><circle cx="9.500" cy="9.500" r="9.300" fill="#fbc116" /><path d="M1.400 4.900A9.300 9.300 0 0 0 9 18.800L13.500 11.500 5.500 11.700z" fill="#2da94f" /><path d="M1.400 4.900 5.500 12 9.500 5h8.100A9.300 9.300 0 0 0 1.400 4.900z" fill="#e33b2e" /><circle cx="9.500" cy="9.500" r="4.400" fill="#fff" /><circle cx="9.500" cy="9.500" r="3.500" fill="#3b7ded" /></svg>
      </AppButton>
      <AppButton $on $w={30} aria-label="Excel"><ExcelIcon s={19} /></AppButton>
    </Apps>
    <Tray>
      <TrayItem $w={26} aria-label="Iconos ocultos"><Svg w={9} h={6} sw={1.300}><path d="m.7 5 3.800-4 3.800 4" /></Svg></TrayItem>
      <TrayItem $w={24} aria-label="OneDrive"><Svg w={14} h={10}><path d="M3.500 9A2.800 2.800 0 0 1 3 3.800 3.800 3.800 0 0 1 10 3.200 3 3 0 0 1 10.500 9z" fill="#b8bbbf" /><path d="M2 7.500 8 4l4 3" /></Svg></TrayItem>
      <TrayItem $w={34}><span>ESP<br />ES</span></TrayItem>
      <TrayItem $w={26} aria-label="Red"><Svg w={13} h={13}><path d="M8 1.500H1v8h10V8M6 9.500v3M3.500 12.500h5M9.500 1.500h3v3l-1.500 1-1.500-1zM11 5.500V8" /></Svg></TrayItem>
      <TrayItem $w={14} aria-label="Volumen"><Svg w={13} h={11}><path d="M.8 4h2L5.500 1.500v8L2.800 7h-2zM7.300 3.800q1.200 1.700 0 3.400M9 2.300q2.500 3.200 0 6.400M10.800 1q3.500 4.500 0 9" /></Svg></TrayItem>
      <TrayItem $w={22} aria-label="Batería"><Svg w={13} h={9}><rect x=".5" y="1" width="10.500" height="7" rx="1.500" /><path d="M2 2.500h5v4H2z" fill="#2b2b2b" stroke="none" /><path d="M12.200 3v3" /></Svg></TrayItem>
      <Clock>08:42 p. m.<br />11/04/2024</Clock>
      <TrayItem $w={24} aria-label="Notificaciones"><svg width="11" height="13" viewBox="0 0 11 13" aria-hidden="true"><path d="M5.500.5C2.800.5 1.500 2.500 1.500 4.700v3L.2 10.500h10.600L9.500 7.700v-3C9.500 2.500 8.200.5 5.500.5zM3.800 11h3.400a1.800 1.800 0 0 1-3.400 0z" fill="#0a4fa8" /></svg></TrayItem>
      <TrayItem $w={30} aria-label="Copilot">
        <svg width="20" height="20" viewBox="0 0 20 20" aria-hidden="true">
          <defs><linearGradient id="co" x1="0" y1="0" x2="0" y2="1"><stop stopColor="#1c78e6" /><stop offset=".5" stopColor="#36c08a" /><stop offset="1" stopColor="#f4b81e" /></linearGradient><linearGradient id="cp" x1="0" y1="0" x2="0" y2="1"><stop stopColor="#8a56e8" /><stop offset="1" stopColor="#f0506e" /></linearGradient></defs>
          <path d="M5 1h6c2 0 2.500 1 3 3H11L8 14c-.5 1.500-1 2-3 2H3c-2 0-3-1.500-2.300-4L3 3.500C3.500 2 4 1 5 1z" fill="url(#co)" />
          <path d="M14 5h2c2.500 0 3.500 1.500 2.800 4l-1.500 5c-.5 2-1.300 2.500-3 2.500H8l3-9.500c.5-1.500 1.500-2 3-2z" fill="url(#cp)" />
          <rect x="4" y="12.500" width="15" height="7" rx="1.500" fill="#f7c520" />
          <text x="11.500" y="18.300" fill="#2a2310" fontSize="6" fontWeight="700" textAnchor="middle">PRE</text>
        </svg>
      </TrayItem>
    </Tray>
  </Taskbar>
);

export default function ExcelDesktop() {
  return (
    <>
      <Global />
      <App>
        <Title />
        <Menus />
        <RibbonBar />
        <Formula />
        <Sheet />
        <SheetTabs />
        <Status />
        <Tasks />
      </App>
    </>
  );
}
